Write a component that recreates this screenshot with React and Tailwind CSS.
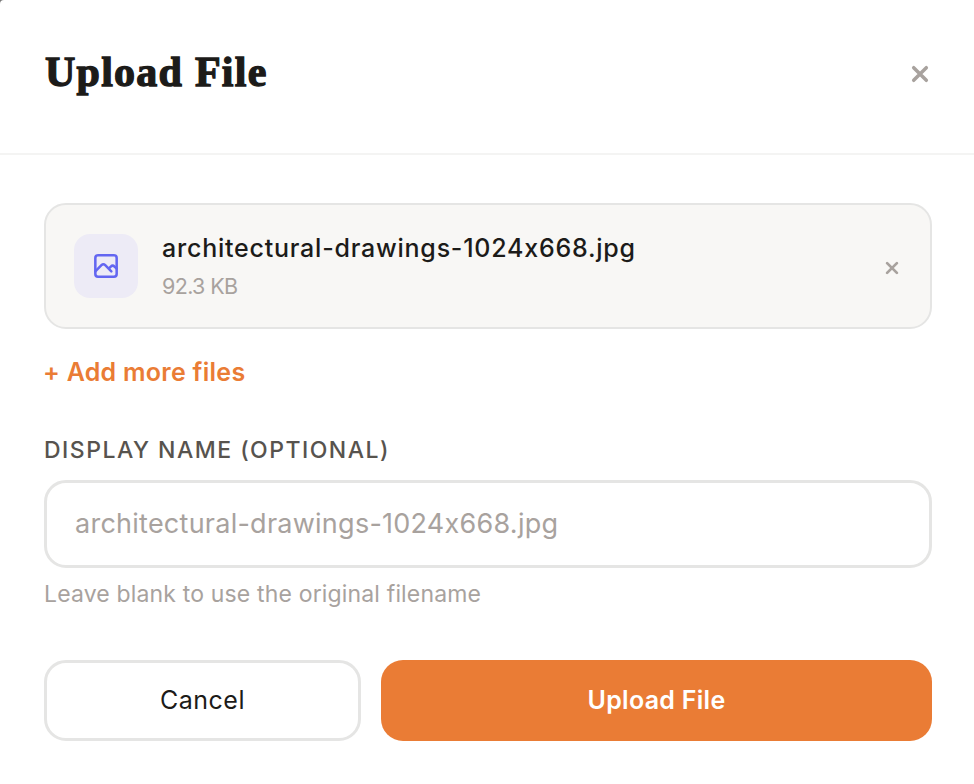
import React from 'react';

function CloseIcon({ className }) {
    return (
        <svg className={className} viewBox="0 0 20 20" fill="none" stroke="currentColor" strokeWidth="3.9" strokeLinecap="round">
            <path d="M3 3l14 14M17 3l-14 14" />
        </svg>
    );
}

function ImageIcon() {
    return (
        <svg className="size-8" viewBox="0 0 24 24" fill="none" stroke="currentColor" strokeWidth="1.9" strokeLinecap="round" strokeLinejoin="round">
            <path d="M4 16l4.586-4.586a2 2 0 012.828 0L16 16m-2-2l1.586-1.586a2 2 0 012.828 0L20 14" />
            <path d="M6 20h12a2 2 0 002-2V6a2 2 0 00-2-2H6a2 2 0 00-2 2v12a2 2 0 002 2z" />
        </svg>
    );
}

function FileCard({ name, size }) {
    return (
        <div className="flex h-[126px] items-center rounded-[22px] border-2 border-[#e5e5e4] bg-[#f8f7f5] pl-7 pr-[31px]">
            <div className="flex size-16 items-center justify-center rounded-2xl bg-[#edebf6] text-[#6366f1]">
                <ImageIcon />
            </div>
            <div className="ml-6 flex-1 pt-[2px]">
                <p className="text-[25px] leading-[38px] font-medium tracking-[0.77px] whitespace-nowrap text-[#1c1b19]">{name}</p>
                <p className="mt-px text-[21.5px] leading-[37px] tracking-[-0.65px] text-[#a8a29e]">{size}</p>
            </div>
            <button className="mt-[3px] text-[#a8a29e]">
                <CloseIcon className="size-[14px]" />
            </button>
        </div>
    );
}

function App() {
    const file = { name: 'architectural-drawings-1024x668.jpg', size: '92.3 KB' };

    return (
        <div className="h-[784px] w-[974px] bg-[#777777] font-['Inter',sans-serif]">
            <div className="h-full overflow-hidden rounded-tl-[4px] bg-white">
                <header className="flex h-[155px] items-start justify-between border-b-2 border-[#f4f4f3] px-[45px]">
                    <h1 className="mt-[42px] font-['Liberation_Serif',serif] text-[42px] leading-[60px] font-bold tracking-[1.25px] text-[#1c1b19] [-webkit-text-stroke:1.3px_#1c1b19]">
                        Upload File
                    </h1>
                    <button className="mt-[65px] text-[#a8a29e]">
                        <CloseIcon className="size-[18px]" />
                    </button>
                </header>

                <main className="pl-11 pr-[42px] pt-12">
                    <FileCard name={file.name} size={file.size} />

                    <button className="-ml-px mt-[23px] block text-[25px] leading-10 font-semibold tracking-[0.27px] text-[#ea7c35]">
                        + Add more files
                    </button>

                    <label className="mt-[42px] block text-[23px] leading-8 font-medium tracking-[1.48px] text-[#57534e]">
                        DISPLAY NAME (OPTIONAL)
                    </label>
                    <input
                        className="mt-[14px] block h-[88px] w-full rounded-[22px] border-3 border-[#e5e5e4] bg-white px-7 pb-[2px] text-[27px] tracking-[0.25px] text-[#1c1b19] placeholder:text-[#a8a29e]"
                        placeholder={file.name}
                    />
                    <p className="mt-[10px] text-[23px] leading-8 tracking-[0.16px] text-[#a8a29e]">
                        Leave blank to use the original filename
                    </p>

                    <div className="mt-[50px] flex gap-5">
                        <button className="h-[81px] w-[317px] rounded-[22px] border-3 border-[#e5e5e4] bg-white text-[25px] tracking-[0.5px] text-[#1c1b19]">
                            Cancel
                        </button>
                        <button className="h-[81px] flex-1 rounded-[22px] bg-[#ea7c35] text-[25px] font-semibold tracking-[0.28px] text-white">
                            Upload File
                        </button>
                    </div>
                </main>
            </div>
        </div>
    );
}

export default App;
